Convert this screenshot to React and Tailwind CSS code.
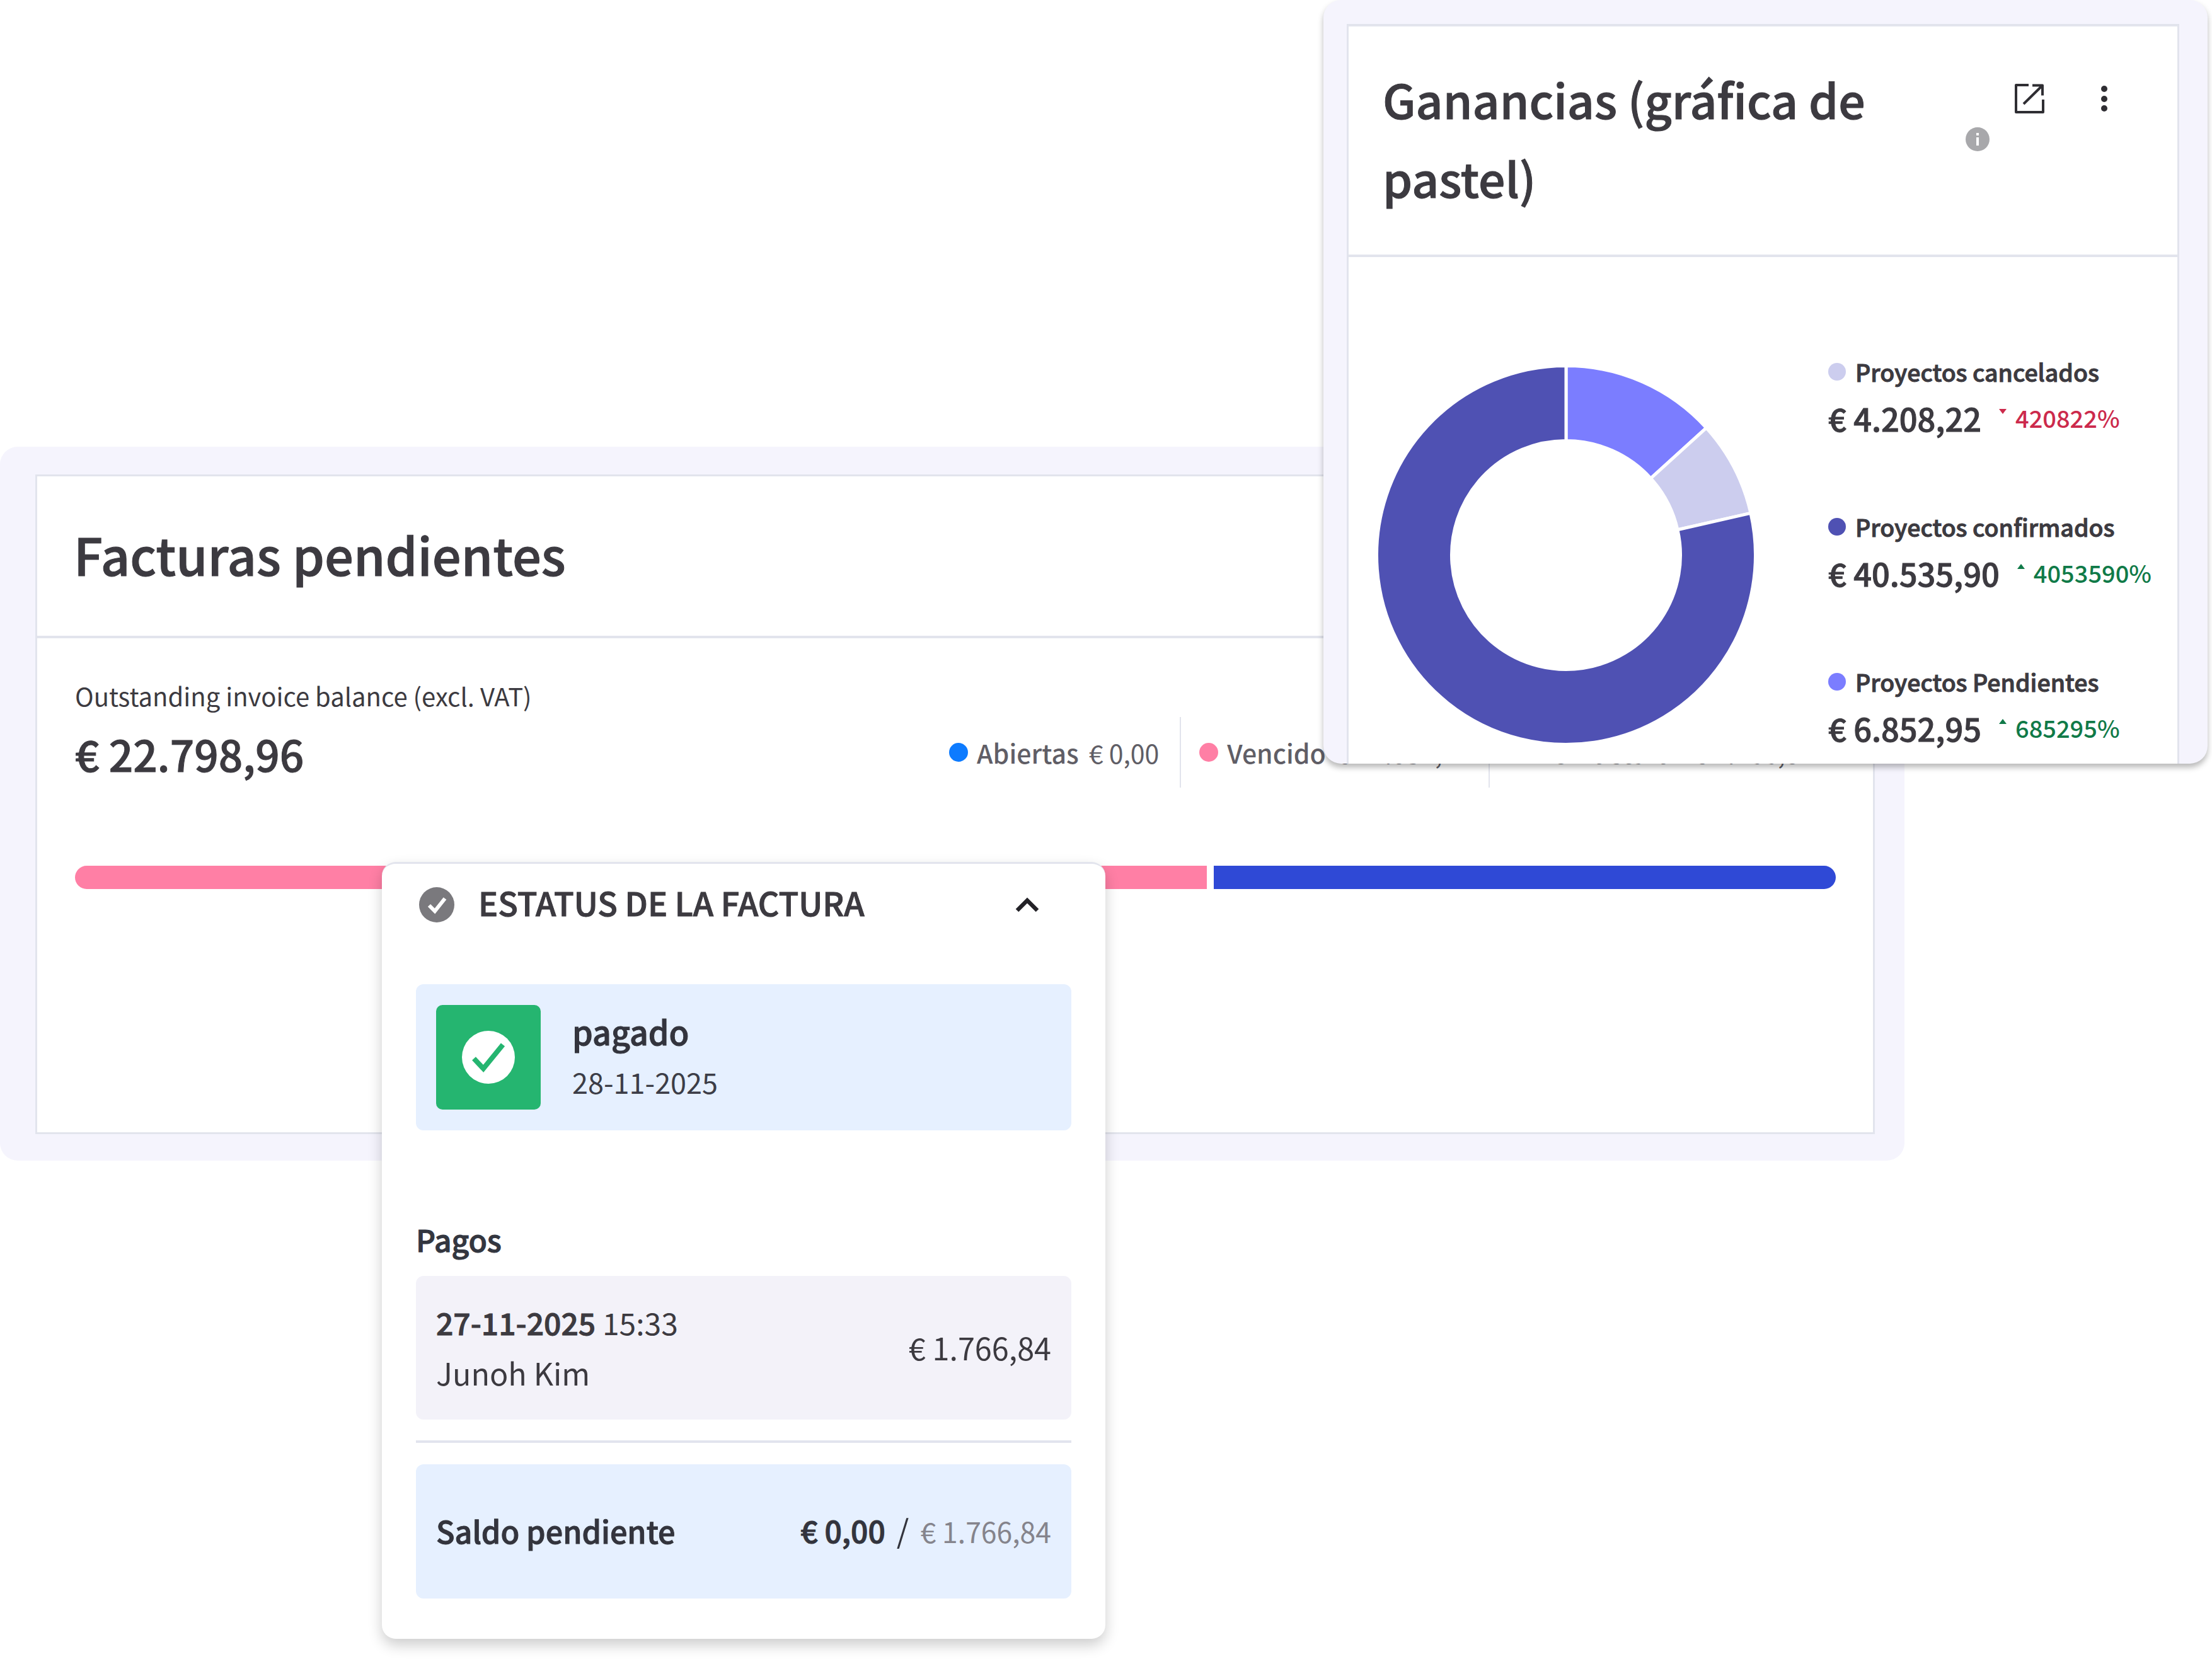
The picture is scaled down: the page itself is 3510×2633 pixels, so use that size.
const FONT = "font-['Noto_Sans_CJK_SC','Noto_Sans',sans-serif]";
const SEMI = "font-medium [-webkit-text-stroke:1px_currentColor]";

function polar(r, deg) {
  const a = ((deg - 90) * Math.PI) / 180;
  return [302 + r * Math.cos(a), 302 + r * Math.sin(a)];
}
function sector(from, to, R = 300.5, r = 181.5) {
  const [x1, y1] = polar(R, from);
  const [x2, y2] = polar(R, to);
  const [x3, y3] = polar(r, to);
  const [x4, y4] = polar(r, from);
  const large = to - from > 180 ? 1 : 0;
  return `M${x1} ${y1}A${R} ${R} 0 ${large} 1 ${x2} ${y2}L${x3} ${y3}A${r} ${r} 0 ${large} 0 ${x4} ${y4}Z`;
}

function Donut() {
  return (
    <svg width="604" height="604" viewBox="0 0 604 604" className="shrink-0">
      <path d={sector(0, 47.8)} fill="#7b7dff" stroke="#fff" strokeWidth="5" />
      <path d={sector(47.8, 77.2)} fill="#cccdee" stroke="#fff" strokeWidth="5" />
      <path d={sector(77.2, 360)} fill="#4f51b3" stroke="#fff" strokeWidth="5" />
    </svg>
  );
}

function LegendRow({ dot, label, value, pct, up }) {
  return (
    <div className="h-[246px] flex flex-col">
      <div className="flex items-center gap-[15px] h-[54px]">
        <span className={`w-[28px] h-[28px] rounded-full ${dot}`} />
        <span className={`text-[37.5px] leading-[54px] text-[#3c3a40] ${SEMI}`}>{label}</span>
      </div>
      <div className="flex items-center h-[70px] mt-[11px]">
        <span className={`text-[50.5px] leading-[70px] text-[#3c3a40] ${SEMI}`}>{value}</span>
        <svg width="14" height="10" viewBox="0 0 14 10" className="ml-[27px] mr-[13px] -mt-[20px]">
          <path d={up ? "M7 1L13 9H1Z" : "M7 9L13 1H1Z"} fill={up ? "#107a48" : "#cc2a4c"} />
        </svg>
        <span className={`text-[38px] leading-[54px] font-medium ${up ? "text-[#107a48]" : "text-[#cc2a4c]"}`}>{pct}</span>
      </div>
    </div>
  );
}

function Stat({ dot, label, value }) {
  return (
    <div className="flex items-center h-[112px]">
      <span className={`w-[30px] h-[30px] rounded-full ${dot}`} />
      <span className="ml-[14px] text-[41px] leading-[60px] font-medium text-[#605e66] whitespace-nowrap">{label}</span>
      <span className="ml-[16px] text-[41px] leading-[60px] text-[#605e66] whitespace-nowrap">{value}</span>
    </div>
  );
}

function InvoiceCard() {
  return (
    <div className="ml-0 mt-[709px] w-[3022px] h-[1133px] bg-[#f5f4fd] rounded-[28px] pt-[44px] pb-[42px] pl-[56px] pr-[47px]">
      <div className="w-full h-full bg-white border-[3px] border-[#e2e4ed] flex flex-col">
        <div className="h-[257px] border-b-[4px] border-[#e2e4ed] flex items-center pl-[58px] pb-[8px] shrink-0">
          <h2 className={`text-[81px] leading-[110px] text-[#3c3a40] ${SEMI}`}>Facturas pendientes</h2>
        </div>
        <div className="pl-[60px] pr-[59px] flex flex-col">
          <div className="flex items-start justify-between">
            <div className="pt-[61px]">
              <div className="text-[40px] leading-[60px] text-[#3c3a40]">Outstanding invoice balance (excl. VAT)</div>
              <div className={`text-[67.5px] leading-[96px] mt-[14px] text-[#3c3a40] ${SEMI}`}>€ 22.798,96</div>
            </div>
            <div className="flex mt-[125px] mr-[35px]">
              <Stat dot="bg-[#0d7bff]" label="Abiertas" value="€ 0,00" />
              <div className="w-[2px] bg-[#e2e4ed] ml-[33px] mr-[29px]" />
              <Stat dot="bg-[#ff7fa5]" label="Vencido" value="€ 21.032,12" />
              <div className="w-[2px] bg-[#e2e4ed] ml-[28px] mr-[31px]" />
              <Stat dot="bg-[#2f49d6]" label="Por facturar" value="€ 1.766,84" />
            </div>
          </div>
          <div className="flex mt-[124px] h-[37px] gap-[11px]">
            <div className="w-[1796px] bg-[#ff7fa5] rounded-l-full" />
            <div className="flex-1 bg-[#2f49d6] rounded-r-full" />
          </div>
        </div>
      </div>
    </div>
  );
}

function GananciasWindow() {
  return (
    <div className="absolute left-[2100px] top-0 w-[1403px] h-[1212px] bg-[#f5f4fd] rounded-[28px] pt-[38px] pl-[37px] pr-[45px] shadow-[0_6px_10px_rgba(0,0,0,0.28)] overflow-hidden">
      <div className="bg-white border-x-[3px] border-t-[4px] border-[#e2e4ed] h-full flex flex-col">
        <div className="h-[366px] border-b-[4px] border-[#e2e4ed] shrink-0 relative pl-[54px] pt-[52px]">
          <h2 className={`w-[840px] text-[75px] leading-[125px] text-[#3c3a40] ${SEMI}`}>Ganancias (gráfica de pastel)</h2>
          <svg className="absolute left-[1057px] top-[91px]" width="47" height="47" viewBox="0 0 47 47" fill="none" stroke="#2f2e33" strokeWidth="4" strokeLinejoin="round">
            <path d="M22 2H2v43h43V25" />
            <path d="M14 32L43 3.5M28 2.5h16v16" />
          </svg>
          <svg className="absolute left-[1187px] top-[91px]" width="24" height="48" viewBox="0 0 24 48" fill="#2f2e33">
            <circle cx="12" cy="8" r="5" />
            <circle cx="12" cy="24" r="5" />
            <circle cx="12" cy="39" r="5" />
          </svg>
          <svg className="absolute left-[979px] top-[160px]" width="38" height="38" viewBox="0 0 38 38">
            <circle cx="19" cy="19" r="19" fill="#a8a8ab" />
            <rect x="17" y="16" width="4" height="13" fill="#fff" />
            <rect x="17" y="9" width="4" height="4" fill="#fff" />
          </svg>
        </div>
        <div className="flex pl-[43px] pt-[171px]">
          <Donut />
          <div className="ml-[114px] -mt-[16px] flex flex-col">
            <LegendRow dot="bg-[#cccdee]" label="Proyectos cancelados" value="€ 4.208,22" pct="420822%" />
            <LegendRow dot="bg-[#4f51b3]" label="Proyectos confirmados" value="€ 40.535,90" pct="4053590%" up />
            <LegendRow dot="bg-[#7b7dff]" label="Proyectos Pendientes" value="€ 6.852,95" pct="685295%" up />
          </div>
        </div>
      </div>
    </div>
  );
}

function StatusPanel() {
  return (
    <div className="absolute left-[606px] top-[1368px] w-[1148px] h-[1233px] bg-white rounded-[22px] border-t-[3px] border-[#e2e4ed] shadow-[0_10px_22px_rgba(0,0,0,0.2)] px-[54px]">
      <div className="h-[130px] flex items-center pl-[5px]">
        <svg width="56" height="56" viewBox="0 0 56 56">
          <circle cx="28" cy="28" r="28" fill="#7a797d" />
          <path d="M16 29l9 9 16-20" fill="none" stroke="#fff" strokeWidth="6" />
        </svg>
        <span className={`ml-[38px] -mt-[8px] text-[52px] leading-[70px] text-[#3c3a40] ${SEMI}`}>ESTATUS DE LA FACTURA</span>
        <svg className="ml-auto mr-[50px]" width="40" height="26" viewBox="0 0 40 26" fill="none" stroke="#232227" strokeWidth="6.5">
          <path d="M4 22L20 6l16 16" />
        </svg>
      </div>
      <div className="mt-[61px] h-[232px] bg-[#e6f0ff] rounded-[12px] flex items-center pl-[32px]">
        <div className="w-[166px] h-[166px] bg-[#25b570] rounded-[10px] flex items-center justify-center">
          <svg width="84" height="84" viewBox="0 0 84 84">
            <circle cx="42" cy="42" r="42" fill="#fff" />
            <path d="M19 44l15 16 31-38" fill="none" stroke="#25b570" strokeWidth="8" />
          </svg>
        </div>
        <div className="ml-[50px] -mt-[4px]">
          <div className={`text-[52px] leading-[74px] -mt-[4px] text-[#33343d] ${SEMI}`}>pagado</div>
          <div className="text-[45px] leading-[62px] mt-[12px] text-[#3c3d47]">28-11-2025</div>
        </div>
      </div>
      <div className={`mt-[138px] text-[48px] leading-[68px] text-[#33363f] ${SEMI}`}>Pagos</div>
      <div className="mt-[25px] h-[228px] bg-[#f3f2f9] rounded-[12px] flex items-center justify-between px-[32px] pb-[3px]">
        <div>
          <div className="text-[48px] leading-[68px] text-[#3c3a40]"><span className={SEMI}>27-11-2025</span> 15:33</div>
          <div className="text-[48.5px] leading-[68px] mt-[12px] text-[#3c3a40]">Junoh Kim</div>
        </div>
        <div className="text-[48.5px] leading-[68px] text-[#3c3a40]">€ 1.766,84</div>
      </div>
      <div className="mt-[33px] h-[4px] bg-[#e2e4ee]" />
      <div className="mt-[34px] h-[213px] bg-[#e6f0ff] rounded-[12px] flex items-center justify-between px-[32px] pb-[4px]">
        <span className={`text-[48.5px] leading-[68px] text-[#33343d] ${SEMI}`}>Saldo pendiente</span>
        <div className="flex items-baseline">
          <span className={`text-[48px] leading-[68px] text-[#33343d] ${SEMI}`}>€ 0,00</span>
          <span className="text-[50px] leading-[68px] mx-[18px] text-[#33343d]">/</span>
          <span className="text-[44.5px] leading-[68px] text-[#85848c]">€ 1.766,84</span>
        </div>
      </div>
    </div>
  );
}

export default function App() {
  return (
    <div className={`relative w-[3510px] h-[2633px] bg-white overflow-hidden flow-root ${FONT}`}>
      <InvoiceCard />
      <StatusPanel />
      <GananciasWindow />
    </div>
  );
}
